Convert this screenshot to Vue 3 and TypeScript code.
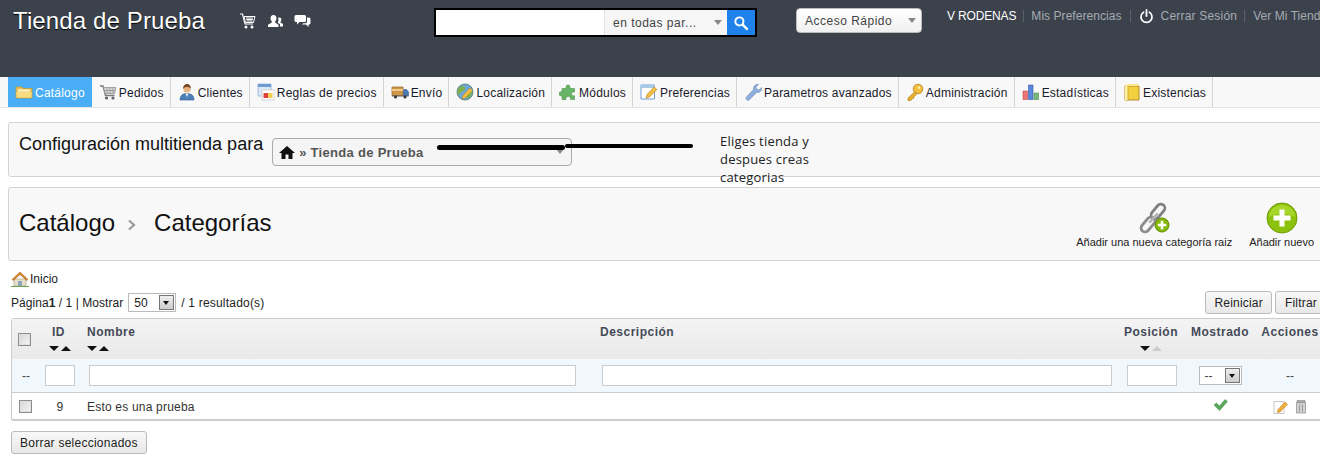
<template>
  <div class="page">
    <header class="top">
      <h1 class="shop">Tienda de Prueba</h1>
      <div class="quick-icons">
        <svg width="18" height="16" viewBox="0 0 18 16"><path d="M1 1h2.500l2.500 10h8" fill="none" stroke="#fff" stroke-width="1.200" /><path d="M5 3.500h11l-1.500 6H6.500z M7 5h7 M7.300 6.500h6.500 M7.600 8h6" fill="none" stroke="#fff" stroke-width="1" /><circle cx="7" cy="14" r="1.500" fill="#fff" /><circle cx="13" cy="14" r="1.500" fill="#fff" /></svg>
        <svg width="15" height="14" viewBox="0 0 15 14"><path d="M5.500 1c2 0 3 1.400 3 3.200 0 1.300-.7 2.500-1.300 3.200v1.200l3.300 2.100V13H0v-2.300l3.800-2.100V7.400C3.200 6.700 2.500 5.500 2.500 4.200 2.500 2.400 3.500 1 5.500 1z" fill="#fff" /><path d="M11.500 3.500c1.200 0 1.900.9 1.900 2.100 0 .9-.4 1.700-.9 2.200v.8L15 10v2.500h-3V10.300L10 9V7.500c.8-1 .5-3 0-3.600.4-.3.900-.4 1.500-.4z" fill="#fff" /></svg>
        <svg width="17" height="15" viewBox="0 0 17 15"><path d="M2 1h8.500a1.500 1.500 0 0 1 1.500 1.500v4A1.500 1.500 0 0 1 10.500 8H5.500L3 10.500V8H2A1.500 1.500 0 0 1 .5 6.500v-4A1.500 1.500 0 0 1 2 1z" fill="#fff" /><path d="M13 3.500h2a1.500 1.500 0 0 1 1.500 1.500v4A1.500 1.500 0 0 1 15 10.500h-.5V13L12 10.500H8l1.300-1.300h2.200A1.500 1.500 0 0 0 13 7.700z" fill="#fff" /></svg>
      </div>
      <div class="search">
        <input class="search-input" type="text" />
        <div class="search-scope">
          <span>en todas par...</span>
          <i class="caret"></i>
        </div>
        <div class="search-btn">
          <svg width="16" height="16" viewBox="0 0 15 15"><circle cx="6" cy="6" r="3.800" fill="none" stroke="#fff" stroke-width="1.800" /><path d="M9 9l4 4" stroke="#fff" stroke-width="2.400" stroke-linecap="round" /></svg>
        </div>
      </div>
      <div class="quick-access">
        <span>Acceso Rápido</span>
        <i class="caret"></i>
      </div>
      <nav class="user-links">
        <span class="who">V RODENAS</span>
        <span class="sep first"></span>
        <a>Mis Preferencias</a>
        <span class="sep"></span>
        <svg class="power" width="15" height="15" viewBox="0 0 15 15"><path d="M4.600 3.200a5.500 5.500 0 1 0 5.800 0" fill="none" stroke="#fff" stroke-width="1.700" stroke-linecap="round" /><path d="M7.500 1v6" stroke="#fff" stroke-width="1.800" stroke-linecap="round" /></svg>
        <a class="logout">Cerrar Sesión</a>
        <span class="sep"></span>
        <a>Ver Mi Tienda</a>
      </nav>
    </header>

    <nav class="tabs">
      <a v-for="tab in tabs" :key="tab.label" class="tab" :class="{ active: tab.active }">
        <svg class="tab-icon" width="18" height="18" viewBox="0 0 18 18" v-html="icons[tab.icon]"></svg>
        <span>{{ tab.label }}</span>
      </a>
    </nav>

    <main class="content">
      <section class="panel shop-panel">
        <h2>Configuración multitienda para</h2>
        <div class="shop-select">
          <svg width="16" height="14" viewBox="0 0 16 14"><path d="M8 1L0 8h2.500v6h4V9.500h3V14h4V8H16z" fill="#111" /></svg>
          <b>» Tienda de Prueba</b>
          <i class="caret small"></i>
        </div>
      </section>

      <section class="panel title-panel">
        <div class="crumbs">
          <span>Catálogo</span>
          <svg width="10" height="12" viewBox="0 0 10 12"><path d="M2 1.500L7 6l-5 4.500" fill="none" stroke="#999" stroke-width="2.200" /></svg>
          <span>Categorías</span>
        </div>
        <div class="actions">
          <a class="action">
            <svg width="32" height="32" viewBox="0 0 32 32">
              <g fill="none">
                <rect x="16" y="1" width="8" height="17" rx="4" transform="rotate(40 20 9.500)" stroke="#808080" stroke-width="2.800" />
                <rect x="6" y="14" width="8" height="17" rx="4" transform="rotate(40 10 22.500)" stroke="#8c8c8c" stroke-width="2.800" />
                <path d="M12 20l7-8" stroke="#b0b0b0" stroke-width="2.400" stroke-linecap="round" />
              </g>
              <circle cx="24" cy="23" r="7" fill="#86b80a" stroke="#5f8c04" />
              <path d="M24 18.800v8.400M19.800 23h8.400" stroke="#fff" stroke-width="2.600" />
            </svg>
            <span>Añadir una nueva categoría raiz</span>
          </a>
          <a class="action">
            <svg width="32" height="32" viewBox="0 0 32 32">
              <circle cx="16" cy="16" r="15" fill="#8cc20c" stroke="#6d9a08" />
              <path d="M3 15a13 12 0 0 1 26 0c-6-4-20-4-26 0z" fill="#a6d62a" />
              <path d="M16 7.500v17M7.500 16h17" stroke="#fff" stroke-width="5" />
            </svg>
            <span>Añadir nuevo</span>
          </a>
        </div>
      </section>

      <div class="home-link">
        <svg width="18" height="16" viewBox="0 0 18 16"><path d="M3 8h12v7H3z" fill="#e8e0cc" stroke="#a89a78" stroke-width=".6" /><path d="M7 10h4v5H7z" fill="#8ea4b8" /><path d="M9 1L1 8.500l1.300 1L9 3.500l6.700 6 1.300-1z" fill="#d98a2b" stroke="#a8601a" stroke-width=".6" /><path d="M0 15h18v1H0z" fill="#6aa84f" /></svg>
        <span>Inicio</span>
      </div>

      <div class="toolbar">
        <div class="paging">
          <span>Página<b>1</b> / 1 | Mostrar</span>
          <div class="win-select page-size">
            <span>50</span>
            <i class="win-arrow"></i>
          </div>
          <span class="results">/ 1 resultado(s)</span>
        </div>
        <div class="toolbar-btns">
          <button class="btn reset-btn">Reiniciar</button>
          <button class="btn">Filtrar</button>
        </div>
      </div>

      <table class="grid">
        <colgroup>
          <col style="width: 28px" />
          <col style="width: 40px" />
          <col style="width: 516px" />
          <col style="width: 524px" />
          <col style="width: 65px" />
          <col style="width: 70px" />
          <col style="width: 70px" />
        </colgroup>
        <thead>
          <tr class="head">
            <th><input type="checkbox" class="check" /></th>
            <th class="center id-head">
              <div>ID</div>
              <div class="sort"><i class="down"></i><i class="up"></i></div>
            </th>
            <th class="name-col">
              <div>Nombre</div>
              <div class="sort"><i class="down"></i><i class="up"></i></div>
            </th>
            <th class="desc-col"><div>Descripción</div><div class="sort"></div></th>
            <th class="center pos-head">
              <div>Posición</div>
              <div class="sort"><i class="down"></i><i class="up off"></i></div>
            </th>
            <th class="center"><div>Mostrado</div><div class="sort"></div></th>
            <th class="center"><div>Acciones</div><div class="sort"></div></th>
          </tr>
          <tr class="filters">
            <td class="center">--</td>
            <td class="center"><input type="text" class="filter id-filter" /></td>
            <td><input type="text" class="filter name-filter" /></td>
            <td><input type="text" class="filter desc-filter" /></td>
            <td><input type="text" class="filter pos-filter" /></td>
            <td class="center">
              <div class="win-select shown-select">
                <span>--</span>
                <i class="win-arrow"></i>
              </div>
            </td>
            <td class="center">--</td>
          </tr>
        </thead>
        <tbody>
          <tr class="row">
            <td><input type="checkbox" class="check row-check" /></td>
            <td class="center">9</td>
            <td class="name-col">Esto es una prueba</td>
            <td></td>
            <td></td>
            <td class="center">
              <svg width="15" height="12" viewBox="0 0 15 12"><path d="M1 6l2.500-2 3 3L12 .500 14.500 2.500 6.500 11.500z" fill="#5aa85c" stroke="#3f8a45" stroke-width=".5" /></svg>
            </td>
            <td class="center">
              <div class="row-actions">
                <svg width="16" height="16" viewBox="0 0 16 16"><path d="M1 2.500h10v12H1z" fill="#fff" stroke="#c8c8c8" /><path d="M5 10.500l7-7.500 2.500 2.500L7 13l-2.700.6z" fill="#f0b040" stroke="#c98a20" stroke-width=".6" /></svg>
                <svg width="12" height="15" viewBox="0 0 12 15"><path d="M2 1.500h8v2H2z" fill="#aaa" stroke="#777" stroke-width=".5" /><path d="M1.500 3.500h9v10.500h-9z" fill="#d2d2d2" stroke="#888" stroke-width=".7" /><path d="M4.500 5.500v7M7.500 5.500v7" stroke="#999" /></svg>
              </div>
            </td>
          </tr>
        </tbody>
      </table>

      <button class="btn delete-btn">Borrar seleccionados</button>
    </main>

    <!-- annotation pasted over the screenshot -->
    <div class="scribble"></div>
    <p class="note">Eliges tienda y<br />despues creas<br />categorias</p>
  </div>
</template>

<script setup lang="ts">
interface Tab {
  label: string;
  icon: string;
  active?: boolean;
}

const tabs: Tab[] = [
  { label: "Catálogo", icon: "folder", active: true },
  { label: "Pedidos", icon: "cart" },
  { label: "Clientes", icon: "user" },
  { label: "Reglas de precios", icon: "rules" },
  { label: "Envío", icon: "truck" },
  { label: "Localización", icon: "globe" },
  { label: "Módulos", icon: "puzzle" },
  { label: "Preferencias", icon: "prefs" },
  { label: "Parametros avanzados", icon: "wrench" },
  { label: "Administración", icon: "key" },
  { label: "Estadísticas", icon: "stats" },
  { label: "Existencias", icon: "box" },
];

const icons: Record<string, string> = {
  folder:
    '<path d="M1 4h6l1 1.500h9V15H1z" fill="#e8c25a" stroke="#c79a35" stroke-width=".8"/><path d="M3 6.500h12v2H3z" fill="#fff6cf"/><path d="M1.500 9h15v5.500h-15z" fill="#f7dd80"/>',
  cart:
    '<path d="M1 3h3l2.500 9.500h9" fill="none" stroke="#777" stroke-width="1.300"/><path d="M4.500 4.500H17l-1.500 6H6z" fill="#d4d4d4" stroke="#8a8a8a" stroke-width=".7"/><path d="M8 4.500v6M11 4.500v6M14 4.500v6M5.500 7.500h11" stroke="#888" stroke-width=".6"/><circle cx="7.500" cy="15" r="1.600" fill="#666"/><circle cx="14" cy="15" r="1.600" fill="#666"/>',
  user:
    '<path d="M2 17c0-4.500 2.500-6.500 7-6.500s7 2 7 6.500z" fill="#4d7fb8" stroke="#36608f" stroke-width=".6"/><path d="M7.500 10.500L9 14l1.500-3.500z" fill="#e9eef5"/><circle cx="9" cy="6" r="3.600" fill="#e8b184"/><path d="M5.200 6c-.3-3.500 1.800-5 3.900-5s4 1.500 3.700 5C12 4.500 10.500 4 9 4S6 4.500 5.200 6z" fill="#7c4a22"/>',
  rules:
    '<path d="M1 1h13v12H1z" fill="#dbe8f6" stroke="#8fb0d6" stroke-width=".8"/><path d="M1 1h13v3H1z" fill="#6d9bd1"/><path d="M5 7h12v10H5z" fill="#fff" stroke="#c9c9c9" stroke-width=".8"/><path d="M6.500 10h4.500v5H6.500z" fill="#e04040"/><path d="M11 10h4.500v5H11z" fill="#f2cf55"/>',
  truck:
    '<path d="M1 4h11v8.500H1z" fill="#cf9848" stroke="#8c6428" stroke-width=".7"/><path d="M1 6h11v2H1z" fill="#f0c888"/><path d="M12.500 6.500h3l2 2.500v3.500h-5z" fill="#4a78b5" stroke="#2f5588" stroke-width=".6"/><path d="M1 12.500h16.500v1H1z" fill="#555"/><circle cx="4.500" cy="14" r="1.500" fill="#333"/><circle cx="14" cy="14" r="1.500" fill="#333"/>',
  globe:
    '<circle cx="9" cy="9" r="8" fill="#6fa6d8" stroke="#4d7c68" stroke-width=".8"/><path d="M3 4.500c3-2 5-1.500 6 0s-1 3-3 4-2 3.500-3.500 3C1 10 1.500 6 3 4.500zM11 9c2-1 4-.5 5 1-.5 3-2.500 5-5 5.500-1.500-2-1.500-5 0-6.500z" fill="#7fb04a"/><path d="M6 16l1-3.500 7-7.500 2.500 2.500-7.500 7.500z" fill="#f2c040" stroke="#b5851e" stroke-width=".6"/>',
  puzzle:
    '<path d="M7 4a2 2 0 0 1 4 0v1.500h4.500V9h-1.200a1.900 1.900 0 0 0 0 3.800h1.200V16.500H11.500V15a2.300 2.300 0 0 0-4.500 0v1.500H3V12.800H2a2 2 0 0 1 0-4h1V5.500h4z" fill="#68b56a" stroke="#4a944d" stroke-width=".6"/>',
  prefs:
    '<path d="M1 2h13.500v14H1z" fill="#fff" stroke="#6f9ed3" stroke-width="1"/><path d="M1 2h13.500v3H1z" fill="#a9c9ea"/><path d="M6 15l1-3.500L14 4l3 2.500-7.500 7.500z" fill="#f2bd45" stroke="#b5851e" stroke-width=".6"/>',
  wrench:
    '<path d="M2 14.500L9.500 6.500C9 3.500 11 1 14.500 1.200L12 4l.7 2.300L15 7l2.800-2.500C18 8 15.500 10 12.500 9.500L5 17.200C3.500 18 1.300 16 2 14.500z" fill="#8fb0dc" stroke="#6c8ab5" stroke-width=".6"/>',
  key:
    '<circle cx="12" cy="6" r="4.800" fill="#f0be3c" stroke="#b5851e" stroke-width=".8"/><circle cx="13" cy="4.800" r="1.200" fill="#fff3c0"/><path d="M8.500 9l-6.500 6v2.500h3l.7-1.700 1.800-.3.500-1.800 3-3z" fill="#e9b02f" stroke="#b5851e" stroke-width=".7"/>',
  stats:
    '<path d="M1 8h4.500v8.500H1z" fill="#ec7478" stroke="#c44a4e" stroke-width=".6"/><path d="M6.500 2h4.500v14.500H6.500z" fill="#5a88dc" stroke="#2f58a8" stroke-width=".6"/><path d="M12 10h4.500v6.500H12z" fill="#78b87a" stroke="#468a4a" stroke-width=".6"/>',
  box:
    '<path d="M2 3h14v14H2z" fill="#f2d040" stroke="#b58a2a" stroke-width="1"/><path d="M2 3l3-2h11v2z" fill="#f9e68c"/><path d="M2 3h3v14H2z" fill="#fff0a0"/><path d="M5 3v14" stroke="#c99e2e" stroke-width=".7"/>',
};
</script>

<style>
html,
body {
  margin: 0;
  background: #fff;
}
</style>

<style scoped>
.page {
  position: relative;
  width: 1320px;
  height: 466px;
  overflow: hidden;
  font-family: "Liberation Sans", Arial, sans-serif;
  font-size: 12px;
  color: #222;
}

.top {
  display: flex;
  align-items: flex-start;
  width: 1400px;
  height: 77px;
  background: #3b424c;
  box-sizing: border-box;
  padding-left: 13px;
}

.shop {
  margin: 7px 0 0;
  font-size: 24px;
  line-height: 28px;
  font-weight: normal;
  letter-spacing: 0.13px;
  color: #fff;
  text-shadow: 0 1px 1px #000;
}

.quick-icons {
  display: flex;
  align-items: center;
  gap: 11px;
  margin: 13px 0 0 34px;
}

.search {
  display: flex;
  width: 323px;
  height: 29px;
  margin: 8px 0 0 123px;
  box-sizing: border-box;
  border: 2px solid #000;
  background: #fff;
}

.search-input {
  width: 168px;
  border: 0;
  padding: 0;
  outline: 0;
}

.search-scope {
  flex: 1;
  display: flex;
  align-items: center;
  justify-content: space-between;
  padding: 0 5px 0 8px;
  background: #f6f6f6;
  border-left: 1px dotted #ccc;
  color: #444;
  letter-spacing: 0.5px;
}

.search-btn {
  display: flex;
  align-items: center;
  justify-content: center;
  width: 28px;
  background: #1f82ea;
}

.caret {
  width: 0;
  height: 0;
  border-left: 4px solid transparent;
  border-right: 4px solid transparent;
  border-top: 5px solid #888;
}

.caret.small {
  position: absolute;
  right: 7px;
  top: 10px;
}

.quick-access {
  display: flex;
  align-items: center;
  justify-content: space-between;
  width: 126px;
  height: 25px;
  margin: 8px 0 0 39px;
  padding: 0 5px 0 8px;
  box-sizing: border-box;
  border-radius: 4px;
  background: linear-gradient(#fff, #f0f0f0);
  border: 1px solid #bbb;
  color: #444;
  font-size: 12px;
  letter-spacing: 0.5px;
}

.user-links {
  display: flex;
  align-items: center;
  margin: 9px 0 0 25px;
  height: 14px;
  color: #a6abb1;
  letter-spacing: 0.05px;
  white-space: nowrap;
}

.who {
  color: #fff;
  letter-spacing: -0.15px;
}

.sep {
  width: 1px;
  height: 12px;
  margin: 0 8px;
  background: #5a616b;
}

.sep.first {
  margin: 0 7px;
}

.power {
  margin: 0 7px 0 0;
}

.logout {
  letter-spacing: 0.2px;
  margin-right: -1px;
}

.tabs {
  display: flex;
  height: 30px;
  padding-left: 8px;
  background: #f8f8f8;
  border-bottom: 1px solid #e4e4e4;
}

.tab {
  display: flex;
  align-items: center;
  gap: 2px;
  padding: 0 6px 0 7px;
  color: #1a1a2a;
  border-right: 1px solid #d4d4d4;
  white-space: nowrap;
  letter-spacing: 0.22px;
}

.tab span {
  padding-top: 1px;
}

.tab.active {
  padding-right: 7px;
  background: #49aef5;
  color: #fff;
  border-right: 0;
}

.tab-icon {
  flex: none;
}

.content {
  width: 1322px;
  padding: 14px 0 0 8px;
}

.panel {
  box-sizing: border-box;
  background: #f8f8f8;
  border: 1px solid #d3d3d3;
  border-radius: 3px;
}

.shop-panel {
  display: flex;
  align-items: flex-start;
  height: 55px;
  padding-left: 10px;
}

.shop-panel h2 {
  margin: 11px 0 0;
  font-size: 18px;
  line-height: 20px;
  font-weight: normal;
  color: #111;
}

.shop-select {
  position: relative;
  display: flex;
  align-items: center;
  gap: 4px;
  width: 300px;
  height: 28px;
  margin: 15px 0 0 9px;
  padding-left: 6px;
  box-sizing: border-box;
  border: 1px solid #aaa;
  border-radius: 4px;
  background: #f5f5f5;
}

.shop-select b {
  font-size: 13px;
  letter-spacing: 0.3px;
  color: #555;
}

.title-panel {
  display: flex;
  justify-content: space-between;
  height: 74px;
  margin-top: 10px;
  padding-left: 10px;
}

.crumbs {
  display: flex;
  align-items: center;
  gap: 12px;
  height: 70px;
  font-size: 24px;
  color: #111;
}

.crumbs svg {
  margin: 3px 5px 0 0;
}

.actions {
  display: flex;
  align-items: flex-start;
  gap: 17px;
  padding: 14px 15px 0 0;
}

.action {
  display: flex;
  flex-direction: column;
  align-items: center;
  gap: 1px;
  font-size: 11px;
  line-height: 14px;
  color: #222;
  white-space: nowrap;
}

.home-link {
  display: flex;
  align-items: center;
  gap: 1px;
  height: 16px;
  margin: 10px 0 0 3px;
  color: #222;
}

.toolbar {
  display: flex;
  justify-content: space-between;
  align-items: center;
  width: 1316px;
  height: 23px;
  margin: 4px 0 4px 3px;
}

.paging {
  display: flex;
  align-items: center;
  gap: 5px;
  letter-spacing: 0.05px;
}

.results {
  letter-spacing: 0.2px;
}

.toolbar-btns {
  display: flex;
  gap: 3px;
}

.btn {
  height: 23px;
  padding: 0 9px;
  border: 1px solid #bbb;
  border-radius: 3px;
  background: linear-gradient(#f8f8f8, #e8e8e8);
  font: 12px "Liberation Sans", Arial, sans-serif;
  letter-spacing: 0.2px;
  color: #222;
}

.reset-btn {
  padding: 0 8px;
}

.win-select {
  display: inline-flex;
  align-items: center;
  justify-content: space-between;
  box-sizing: border-box;
  border: 1px solid #bbb;
  background: #fff;
  padding: 0 1px 0 5px;
  text-align: left;
}

.page-size {
  width: 48px;
  height: 19px;
}

.shown-select {
  width: 43px;
  height: 19px;
}

.win-arrow {
  position: relative;
  display: block;
  width: 15px;
  height: 15px;
  border: 1px solid #777;
  box-sizing: border-box;
  background: linear-gradient(#eee, #ccc);
}

.win-arrow::after {
  content: "";
  position: absolute;
  left: 3px;
  top: 5px;
  border-left: 3.500px solid transparent;
  border-right: 3.500px solid transparent;
  border-top: 4px solid #111;
}

.grid {
  table-layout: fixed;
  width: 1315px;
  margin-left: 3px;
  border-collapse: separate;
  border-spacing: 0;
  border: 1px solid #ccc;
  border-bottom-width: 2px;
  border-radius: 3px;
  font-size: 12px;
}

.grid th,
.grid td {
  padding: 0;
}

.center {
  text-align: center;
}

.head {
  height: 40px;
  background: linear-gradient(#f4f4f4, #e9e9e9);
}

.head th {
  vertical-align: top;
  padding-top: 6px;
  line-height: 15px;
  color: #444a58;
  letter-spacing: 0.5px;
}

.head th .sort {
  height: 14px;
  margin-top: 1px;
}

.head th:first-child {
  vertical-align: middle;
  padding-top: 0;
}

.grid .id-head > div:first-child {
  padding-right: 3px;
}

.grid .pos-head {
  padding-right: 3px;
}

.name-col {
  padding-left: 7px !important;
  text-align: left;
}

.desc-col {
  padding-left: 4px !important;
  text-align: left;
}

.sort {
  display: flex;
  gap: 2px;
  align-items: center;
}

.center .sort {
  justify-content: center;
}

.sort i {
  width: 0;
  height: 0;
  border-left: 5px solid transparent;
  border-right: 5px solid transparent;
}

.sort .down {
  border-top: 5px solid #111;
}

.sort .up {
  border-bottom: 5px solid #111;
}

.sort .up.off {
  border-bottom-color: #ccc;
}

.filters {
  height: 34px;
  background: #f0f7fd;
  color: #444;
}

.filters td {
  border-bottom: 1px solid #ccc;
}

.filter {
  display: block;
  box-sizing: border-box;
  height: 21px;
  padding: 0;
  border: 1px solid #ccc;
  background: #fff;
  outline: 0;
}

.id-filter {
  width: 30px;
  margin: 0 auto;
}

.name-filter {
  width: 487px;
  margin-left: 9px;
}

.desc-filter {
  width: 510px;
  margin-left: 6px;
}

.pos-filter {
  width: 50px;
  margin-left: 7px;
}

.row {
  height: 26px;
  color: #333;
  letter-spacing: 0.2px;
}

.grid .row td {
  padding-top: 1px;
}

.check {
  appearance: none;
  display: block;
  width: 13px;
  height: 13px;
  margin: 0 0 0 6px;
  border: 1px solid #8c8c8c;
  background: linear-gradient(135deg, #d4d4d4, #f6f6f6);
  box-shadow: inset 0 0 0 1px #e0e0e0;
}

.row-check {
  margin-left: 7px;
}

.row-actions {
  display: flex;
  justify-content: center;
  align-items: center;
  gap: 6px;
}

.delete-btn {
  display: block;
  margin: 10px 0 0 3px;
  padding: 0 8px;
  letter-spacing: 0.25px;
}

.scribble {
  position: absolute;
  left: 437px;
  top: 145px;
  width: 128px;
  height: 5px;
  border-radius: 3px;
  background: #000;
}

.scribble::after {
  content: "";
  position: absolute;
  left: 128px;
  top: -1px;
  width: 128px;
  height: 4px;
  border-radius: 2px;
  background: #000;
}

.note {
  position: absolute;
  left: 720px;
  top: 132px;
  margin: 0;
  font-family: "Open Sans", sans-serif;
  font-size: 13px;
  letter-spacing: 0.2px;
  line-height: 18px;
  color: #222;
}
</style>
